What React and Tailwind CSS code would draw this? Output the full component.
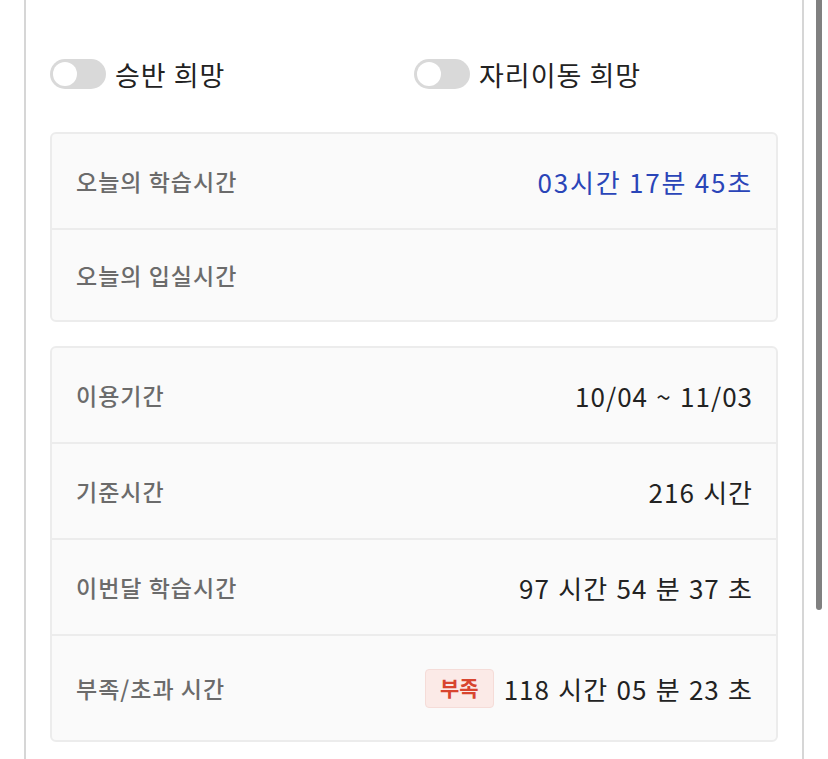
const font = { fontFamily: '"Noto Sans CJK KR", "Noto Sans", sans-serif' };

const Toggle = ({ label }) => (
  <div className="flex items-center gap-[9px]">
    <div className="flex h-[30px] w-[56px] items-center rounded-full bg-[#d9d9d9] px-[3px]">
      <span className="h-[24px] w-[24px] rounded-full bg-white" />
    </div>
    <span className="text-[27px] leading-none tracking-[1px] text-[#222]">{label}</span>
  </div>
);

const Row = ({ label, children, last, h = 'h-[96px]' }) => (
  <div className={`flex ${h} items-center justify-between pl-[24px] pr-[23px] ${last ? '' : 'border-b-2 border-[#ececec]'}`}>
    <span className="text-[23px] font-medium tracking-[1px] text-[#6b6b6b]">{label}</span>
    <div className="flex items-center">{children}</div>
  </div>
);

const Value = ({ children, blue }) => (
  <span
    className={`text-[26px] ${blue ? 'tracking-[1.8px] text-[#2a45b8]' : 'tracking-[1px] [word-spacing:1.5px] text-[#222]'}`}
  >
    {children}
  </span>
);

export default function App() {
  return (
    <div className="relative h-[759px] w-[828px] overflow-hidden bg-white" style={font}>
      <div className="ml-[24px] h-full w-[780px] border-x-2 border-[#d6d6d6] px-[24px] pt-[59px]">
        <div className="grid grid-cols-2">
          <Toggle label="승반 희망" />
          <Toggle label="자리이동 희망" />
        </div>

        <div className="mt-[43px] overflow-hidden rounded-[6px] border-2 border-[#ececec] bg-[#fafafa]">
          <Row label="오늘의 학습시간">
            <Value blue>03시간 17분 45초</Value>
          </Row>
          <Row label="오늘의 입실시간" last h="h-[90px]" />
        </div>

        <div className="mt-[24px] overflow-hidden rounded-[6px] border-2 border-[#ececec] bg-[#fafafa]">
          <Row label="이용기간">
            <Value>10/04 ~ 11/03</Value>
          </Row>
          <Row label="기준시간">
            <Value>216 시간</Value>
          </Row>
          <Row label="이번달 학습시간">
            <Value>97 시간 54 분 37 초</Value>
          </Row>
          <Row label="부족/초과 시간" last h="h-[104px]">
            <span className="mr-[10px] flex h-[39px] items-center rounded-[4px] border border-[#f5dcd8] bg-[#fbeae7] px-[14px] text-[21px] font-bold text-[#d8452f]">
              부족
            </span>
            <Value>118 시간 05 분 23 초</Value>
          </Row>
        </div>
      </div>
      <div className="absolute right-[6px] top-0 h-[610px] w-[6px] rounded-b-full bg-[#808080]" />
    </div>
  );
}
